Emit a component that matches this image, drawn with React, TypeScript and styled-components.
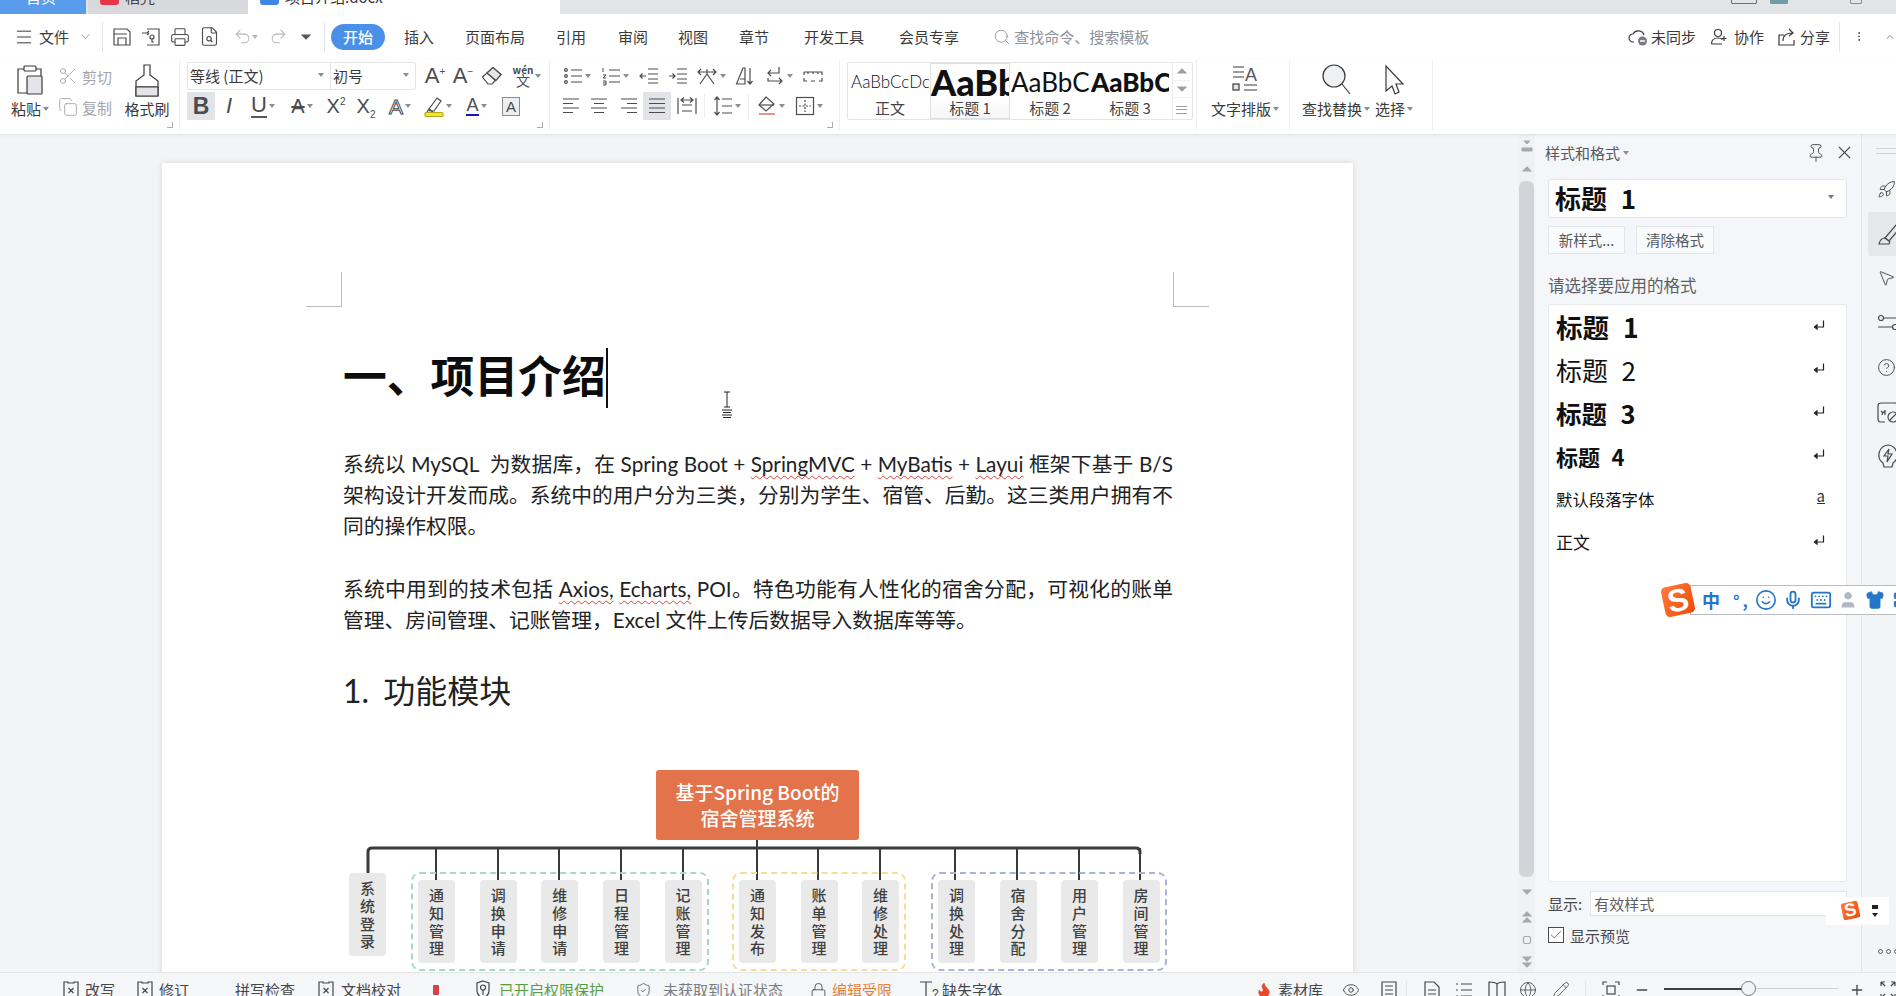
import React from "react";
import styled, { createGlobalStyle } from "styled-components";
import {
	CircleHelp,
	Copy,
	EllipsisVertical,
	Eye,
	Globe,
	Keyboard,
	LayoutGrid,
	Lock,
	Menu,
	Mic,
	Minus,
	MousePointer2,
	Pin,
	Plus,
	Printer,
	Redo2,
	Rocket,
	Scissors,
	Search,
	Shirt,
	ShieldCheck,
	Smile,
	Undo2,
	User,
	X,
	ChevronDown,
	ChevronUp,
	Check,
	FileSearch,
	Pencil,
	Flame,
} from "lucide-react";

const CJK = `"Noto Sans CJK SC", "Noto Sans", sans-serif`;
const LATIN = `Lato, "Noto Sans CJK SC", sans-serif`;

const GlobalStyle = createGlobalStyle`
	html, body {
		margin: 0;
		padding: 0;
		height: 996px;
		overflow: hidden;
		background: #fff;
		font-family: ${CJK};
	}
	* { box-sizing: border-box; }
`;

const Shell = styled.div`
	width: 1896px;
	height: 996px;
	display: flex;
	flex-direction: column;
	overflow: hidden;
	color: #333;
	position: relative;
`;

/* ---- title bar, only its lower edge is on screen ---- */
const TitleBar = styled.div`
	height: 14px;
	flex: none;
	display: flex;
	background: #e2e4e7;
	overflow: hidden;
`;
const TitleTab = styled.div<{ $w: number; $bg: string; $fg: string; $ml?: number; $pl?: number }>`
	width: ${(p) => p.$w}px;
	margin-left: ${(p) => p.$ml || 0}px;
	height: 14px;
	background: ${(p) => p.$bg};
	color: ${(p) => p.$fg};
	display: flex;
	align-items: flex-end;
	gap: 6px;
	padding: 0 12px 10px ${(p) => p.$pl || 12}px;
	font-size: 15px;
	line-height: 15px;
	white-space: nowrap;
`;
const TabIcon = styled.span<{ $c: string }>`
	width: 19px;
	height: 19px;
	flex: none;
	border-radius: 3px;
	background: ${(p) => p.$c};
	margin-bottom: -1px;
`;
const TitleRight = styled.div`
	margin-left: auto;
	display: flex;
	align-items: flex-end;
	padding: 0 34px 10px 0;
	height: 14px;
`;
const TitleMark = styled.span<{ $w: number; $c: string; $ml?: number }>`
	width: ${(p) => p.$w}px;
	height: 12px;
	margin-left: ${(p) => p.$ml || 0}px;
	border: 1px solid ${(p) => p.$c};
	background: ${(p) => (p.$ml === 13 ? p.$c : "transparent")};
	border-radius: 1px;
`;

/* ---- menu row ---- */
const MenuRow = styled.div`
	height: 46px;
	flex: none;
	display: flex;
	align-items: center;
	padding-bottom: 1px;
	background: #fff;
	font-size: 15px;
	color: #3a3a3a;
	white-space: nowrap;
`;
const Slot = styled.span<{ $w: number; $ml?: number; $c?: string }>`
	display: inline-flex;
	align-items: center;
	justify-content: center;
	flex: none;
	width: ${(p) => p.$w}px;
	margin-left: ${(p) => p.$ml || 0}px;
	color: ${(p) => p.$c || "inherit"};
`;
const Rule = styled.span<{ $ml?: number; $h?: number }>`
	flex: none;
	width: 1px;
	height: ${(p) => p.$h || 30}px;
	margin-left: ${(p) => p.$ml || 0}px;
	background: #e4e5e8;
`;
const MenuTab = styled.span<{ $ml: number }>`
	margin-left: ${(p) => p.$ml}px;
	flex: none;
`;
const ActiveTab = styled.span`
	flex: none;
	margin-left: 6px;
	width: 54px;
	height: 26px;
	border-radius: 13px;
	background: #4a90e9;
	color: #fff;
	display: flex;
	align-items: center;
	justify-content: center;
	font-weight: 500;
`;
const SearchHint = styled.span`
	margin-left: 34px;
	display: flex;
	align-items: center;
	gap: 3px;
	color: #8d9199;
	flex: none;
	width: 160px;
`;
const MenuRight = styled.div`
	margin-left: auto;
	display: flex;
	align-items: center;
`;

/* ---- ribbon ---- */
const Ribbon = styled.div`
	height: 74px;
	flex: none;
	display: flex;
	background: #fff;
	box-shadow: 0 1px 3px rgba(0, 0, 0, 0.08);
	position: relative;
	z-index: 2;
	font-size: 15px;
	color: #3a3a3a;
`;
const Group = styled.div<{ $w: number; $pl?: number; $ml?: number; $line?: boolean }>`
	flex: none;
	position: relative;
	width: ${(p) => p.$w}px;
	height: 70px;
	margin-left: ${(p) => p.$ml || 0}px;
	padding-left: ${(p) => p.$pl || 0}px;
	display: flex;
	border-right: ${(p) => (p.$line ? "1px solid #eeeff1" : "none")};
`;
const Launcher = styled.span`
	position: absolute;
	right: 6px;
	bottom: 2px;
	width: 6px;
	height: 6px;
	border-right: 1.5px solid #a9abb0;
	border-bottom: 1.5px solid #a9abb0;
`;
const BigButton = styled.div<{ $w: number; $ml?: number }>`
	flex: none;
	width: ${(p) => p.$w}px;
	margin-left: ${(p) => p.$ml || 0}px;
	padding-top: 4px;
	height: 60px;
	display: flex;
	flex-direction: column;
	align-items: center;
	justify-content: space-between;
	white-space: nowrap;
`;
const BigLabel = styled.span`
	display: flex;
	align-items: center;
	gap: 2px;
	height: 22px;
	line-height: 22px;
`;
const Caret = styled.i<{ $c?: string }>`
	flex: none;
	display: inline-block;
	width: 0;
	height: 0;
	border-left: 3.5px solid transparent;
	border-right: 3.5px solid transparent;
	border-top: 4px solid ${(p) => p.$c || "#8a8d92"};
`;
const SmallPair = styled.div`
	flex: none;
	width: 62px;
	margin-left: 6px;
	display: flex;
	flex-direction: column;
	gap: 3px;
	padding-top: 2px;
	color: #a4a6ab;
`;
const SmallAction = styled.span`
	height: 28px;
	display: flex;
	align-items: center;
	gap: 4px;
`;
const Rows = styled.div`
	display: flex;
	flex-direction: column;
	gap: 2px;
	padding-top: 2px;
`;
const ToolRow = styled.div`
	height: 28px;
	display: flex;
	align-items: center;
`;
const Tool = styled.span<{ $w: number; $on?: boolean; $ml?: number }>`
	flex: none;
	height: 28px;
	width: ${(p) => p.$w}px;
	margin-left: ${(p) => p.$ml || 0}px;
	display: inline-flex;
	align-items: center;
	justify-content: center;
	gap: 2px;
	color: #4a4c50;
	background: ${(p) => (p.$on ? "#e1e3e7" : "transparent")};
`;
const Glyph = styled.span<{ $s: number; $b?: boolean; $i?: boolean; $u?: string; $strike?: boolean; $hollow?: boolean }>`
	font-family: "Liberation Sans", sans-serif;
	font-size: ${(p) => p.$s}px;
	line-height: 1;
	font-weight: ${(p) => (p.$b ? 700 : 400)};
	font-style: ${(p) => (p.$i ? "italic" : "normal")};
	border-bottom: ${(p) => (p.$u ? `2px solid ${p.$u}` : "none")};
	text-decoration: ${(p) => (p.$strike ? "line-through" : "none")};
	${(p) => (p.$hollow ? "color: #fff; -webkit-text-stroke: 1px #4a4c50;" : "")}
	sup, sub {
		font-size: 10px;
		line-height: 0;
	}
`;
const BoxGlyph = styled(Glyph)`
	border: 1px solid #8a8c91;
	background: #eceef0;
	padding: 1px 3px;
`;
const FontCombo = styled.div`
	width: 229px;
	height: 28px;
	flex: none;
	display: flex;
	background: #fff;
	border: 1px solid #e4e5e8;
	border-radius: 2px;
`;
const ComboPart = styled.span<{ $w: number; $line?: boolean }>`
	width: ${(p) => p.$w}px;
	display: flex;
	align-items: center;
	justify-content: space-between;
	padding: 0 6px 2px 2px;
	border-right: ${(p) => (p.$line ? "1px solid #e4e5e8" : "none")};
	white-space: nowrap;
`;
const Wen = styled.span`
	display: flex;
	flex-direction: column;
	align-items: center;
	font-size: 14px;
	line-height: 13px;
	small {
		font-size: 10px;
		line-height: 9px;
		font-weight: 700;
	}
`;
const ToolRule = styled.span`
	width: 1px;
	height: 24px;
	margin: 0 2px;
	background: #eceef0;
	flex: none;
`;
const Gallery = styled.div`
	flex: none;
	width: 346px;
	height: 58px;
	margin: 2px 0 0 0;
	background: #fff;
	border: 1px solid #e4e5e8;
	border-radius: 2px;
	display: flex;
	padding-left: 2px;
`;
const StyleCard = styled.div<{ $on?: boolean }>`
	flex: none;
	width: 80px;
	height: 56px;
	overflow: hidden;
	display: flex;
	flex-direction: column;
	align-items: center;
	border: 1px solid ${(p) => (p.$on ? "#dfe0e3" : "transparent")};
	background: ${(p) => (p.$on ? "linear-gradient(#fff 60%, #f6f6f7)" : "transparent")};
	white-space: nowrap;
`;
const StylePreview = styled.div<{ $s: number; $b?: boolean; $light?: boolean }>`
	height: 35px;
	width: 100%;
	flex: none;
	display: flex;
	align-items: center;
	overflow: hidden;
	font-family: ${LATIN};
	font-size: ${(p) => p.$s}px;
	font-weight: ${(p) => (p.$b ? 900 : p.$light ? 300 : 400)};
	color: #111;
`;
const StyleName = styled.div`
	font-size: 15px;
	line-height: 17px;
	color: #444;
`;
const GalleryScroll = styled.div`
	flex: none;
	margin-left: 2px;
	width: 18px;
	border-left: 1px solid #eceef0;
	display: flex;
	flex-direction: column;
	color: #9b9da2;
`;
const ScrollCell = styled.span`
	flex: 1;
	display: flex;
	align-items: center;
	justify-content: center;
	border-bottom: 1px solid #f0f1f3;
	&:last-child {
		border-bottom: 0;
	}
`;

/* ---- body ---- */
const Body = styled.div`
	flex: 1;
	min-height: 0;
	display: flex;
	background: #f3f4f6;
`;
const Canvas = styled.div`
	width: 1518px;
	flex: none;
	padding: 29px 0 0 162px;
	overflow: hidden;
`;
const Page = styled.div`
	position: relative;
	width: 1191px;
	height: 900px;
	padding: 185px 180px 0 181px;
	background: #fff;
	box-shadow: 0 0 6px rgba(0, 0, 0, 0.12);
	color: #222;
`;
const CropMark = styled.span<{ $right?: boolean }>`
	position: absolute;
	top: 109px;
	left: ${(p) => (p.$right ? 1011 : 144)}px;
	width: 36px;
	height: 35px;
	border-bottom: 1px solid #bdbdbd;
	${(p) => (p.$right ? "border-left" : "border-right")}: 1px solid #bdbdbd;
`;
const Heading = styled.h1`
	margin: 0;
	height: 60px;
	display: flex;
	align-items: center;
	font-size: 43.8px;
	font-weight: 700;
	line-height: 60px;
	color: #0c0c0c;
`;
const HeadingText = styled.span`
	padding-bottom: 8px;
`;
const TextCaret = styled.span`
	width: 2px;
	height: 60px;
	margin-left: 0;
	background: #111;
	flex: none;
`;
const MouseCursor = styled.svg`
	position: absolute;
	left: 559px;
	top: 228px;
`;
const Paragraph = styled.div<{ $mt: number }>`
	margin-top: ${(p) => p.$mt}px;
`;
const TextLine = styled.div<{ $fit?: boolean }>`
	height: 31px;
	line-height: 31px;
	font-family: ${LATIN};
	font-size: 20.75px;
	font-weight: 400;
	white-space: normal;
	text-align: justify;
	text-align-last: ${(p) => (p.$fit ? "justify" : "left")};
	overflow: hidden;
`;
const Typo = styled.span`
	text-decoration: underline wavy #d8453e 1px;
	text-underline-offset: 3px;
	text-decoration-skip-ink: none;
`;
const SectionTitle = styled.h2`
	margin: 30px 0 0;
	height: 50px;
	line-height: 50px;
	font-size: 32px;
	font-weight: 400;
	font-family: ${LATIN};
	word-spacing: 6px;
`;

/* ---- the module diagram ---- */
const Diagram = styled.div`
	position: relative;
	margin-top: 54px;
	width: 830px;
`;
const DiagramLines = styled.svg`
	position: absolute;
	left: 0;
	top: 0;
`;
const RootNode = styled.div`
	position: relative;
	margin-left: 313px;
	width: 203px;
	height: 70px;
	border-radius: 3px;
	background: #e2734a;
	color: #fff;
	font-size: 19px;
	line-height: 26px;
	font-weight: 500;
	display: flex;
	flex-direction: column;
	align-items: center;
	justify-content: center;
`;
const NodeRow = styled.div`
	position: relative;
	margin: 32px 0 0 6px;
	display: flex;
	align-items: flex-start;
`;
const ModuleNode = styled.div<{ $top?: number }>`
	flex: none;
	width: 37px;
	height: 83px;
	margin-top: ${(p) => p.$top || 0}px;
	padding: 0 11px;
	border-radius: 4px;
	background: #e9e9e9;
	color: #3f3f3f;
	font-size: 15px;
	line-height: 17.6px;
	font-weight: 500;
	display: flex;
	align-items: center;
	justify-content: center;
	word-break: break-all;
	text-align: center;
`;
const ModuleGroup = styled.div<{ $w: number; $ml: number; $c: string }>`
	flex: none;
	width: ${(p) => p.$w}px;
	height: 99px;
	margin-left: ${(p) => p.$ml}px;
	padding: 6px 5px 0;
	border: 2px dashed ${(p) => p.$c};
	border-radius: 9px;
	display: flex;
	justify-content: space-between;
`;

/* ---- vertical scroll bar ---- */
const ScrollBar = styled.div`
	width: 17px;
	flex: none;
	background: #f0f1f4;
	display: flex;
	flex-direction: column;
	align-items: center;
	color: #a5a8ae;
`;
const ScrollButton = styled.span<{ $h: number }>`
	height: ${(p) => p.$h}px;
	display: flex;
	align-items: center;
	justify-content: center;
	flex: none;
`;
const ScrollThumb = styled.span`
	width: 15px;
	height: 696px;
	flex: none;
	border-radius: 6px;
	background: #d1d4d9;
`;

/* ---- styles panel ---- */
const Panel = styled.div`
	width: 327px;
	flex: none;
	padding: 0 14px 0 13px;
	background: #f5f6f9;
	border-right: 1px solid #e5e6e9;
`;
const PanelHead = styled.div`
	height: 37px;
	display: flex;
	align-items: center;
	margin-left: -3px;
	font-size: 15px;
	color: #55585e;
	gap: 3px;
`;
const PanelTools = styled.div`
	margin-left: auto;
	display: flex;
	align-items: center;
	gap: 8px;
	margin-right: -8px;
	color: #4d4f54;
`;
const StyleSelect = styled.div`
	margin-top: 8px;
	height: 39px;
	background: #fff;
	border: 1px solid #e3e5e8;
	border-radius: 3px;
	display: flex;
	align-items: center;
	justify-content: space-between;
	padding: 0 12px 3px 6px;
`;
const StyleText = styled.span<{ $s: number; $b?: boolean }>`
	font-size: ${(p) => p.$s}px;
	font-weight: ${(p) => (p.$b ? 700 : 400)};
	color: #111;
	word-spacing: 0.3em;
	white-space: nowrap;
`;
const PanelButtons = styled.div`
	margin-top: 8px;
	display: flex;
	gap: 11px;
`;
const PanelButton = styled.span<{ $w: number }>`
	width: ${(p) => p.$w}px;
	height: 28px;
	border: 1px solid #e3e5e8;
	background: #f9fafb;
	display: flex;
	align-items: center;
	justify-content: center;
	padding-bottom: 1px;
	font-size: 14.5px;
	color: #55585e;
`;
const PanelLabel = styled.div`
	margin-top: 19px;
	height: 24px;
	line-height: 24px;
	font-size: 16.5px;
	color: #5c5f65;
`;
const StyleList = styled.div`
	margin-top: 7px;
	height: 578px;
	background: #fff;
	border: 1px solid #e8e9ec;
	border-radius: 3px;
`;
const StyleItem = styled.div`
	height: 43px;
	display: flex;
	align-items: center;
	justify-content: space-between;
	padding: 0 21px 0 7px;
`;
const ReturnSlot = styled.span`
	margin-bottom: 4px;
	color: #222;
`;
const UnderA = styled.span`
	font-size: 15px;
	line-height: 14px;
	border-bottom: 1.5px solid #333;
	color: #333;
	margin-bottom: 4px;
`;
const ShowRow = styled.div`
	margin-top: 9px;
	display: flex;
	align-items: center;
	font-size: 15px;
	height: 25px;
	color: #44474c;
`;
const ShowField = styled.span`
	margin-left: 8px;
	flex: 1;
	height: 25px;
	background: #fff;
	border: 1px solid #e3e5e8;
	padding-left: 3px;
	line-height: 23px;
	color: #5c5f65;
`;
const PreviewRow = styled.div`
	margin-top: 10px;
	height: 18px;
	display: flex;
	align-items: center;
	gap: 6px;
	font-size: 15px;
	color: #44474c;
`;
const CheckBox = styled.span`
	width: 16px;
	height: 16px;
	border: 1px solid #46494e;
	background: #fff;
	display: flex;
	align-items: center;
	justify-content: center;
`;

/* ---- right rail ---- */
const Rail = styled.div`
	flex: 1;
	min-width: 0;
	overflow: hidden;
	display: flex;
	flex-direction: column;
	color: #46494e;
`;
const RailHandle = styled.div`
	height: 33px;
	flex: none;
	margin-left: 14px;
	padding-top: 14px;
	&::before {
		content: "";
		display: block;
		height: 4px;
		border-top: 1px solid #d0d2d6;
		border-bottom: 1px solid #d0d2d6;
	}
`;
const RailItem = styled.div<{ $on?: boolean }>`
	flex: none;
	height: 44.5px;
	margin-left: 6px;
	padding-left: 9px;
	display: flex;
	align-items: center;
	background: ${(p) => (p.$on ? "#e5e7ea" : "transparent")};
	border-radius: 3px 0 0 3px;
`;
const RailDots = styled.div`
	margin-top: auto;
	padding: 0 0 18px 16px;
	display: flex;
	gap: 3px;
`;
const Dot = styled.i`
	flex: none;
	width: 5px;
	height: 5px;
	border-radius: 50%;
	border: 1px solid #5c5f65;
`;

/* ---- status bar ---- */
const StatusBar = styled.div`
	height: 24px;
	flex: none;
	position: relative;
	z-index: 2;
	display: flex;
	align-items: flex-start;
	padding-top: 8px;
	background: #f5f6f8;
	border-top: 1px solid #e3e4e6;
	font-size: 15px;
	line-height: 18px;
	color: #44474c;
	white-space: nowrap;
	overflow: hidden;
`;
const StatusItem = styled.span<{ $ml: number; $c?: string }>`
	flex: none;
	display: flex;
	align-items: center;
	height: 18px;
	margin-left: ${(p) => p.$ml}px;
	color: ${(p) => p.$c || "inherit"};
`;
const RecDot = styled.span`
	width: 6px;
	height: 10px;
	border-radius: 1px;
	background: #d5434a;
`;
const StatusRight = styled.div`
	margin-left: auto;
	display: flex;
	align-items: flex-start;
`;
const ZoomTrack = styled.div`
	position: relative;
	flex: none;
	margin-left: 14px;
	width: 174px;
	height: 18px;
	&::before {
		content: "";
		position: absolute;
		left: 0;
		top: 7px;
		width: 84px;
		height: 1.5px;
		background: #3d3f44;
	}
	&::after {
		content: "";
		position: absolute;
		left: 84px;
		top: 7px;
		width: 90px;
		height: 1px;
		background: #cfd1d5;
	}
`;
const ZoomThumb = styled.span`
	position: absolute;
	left: 77px;
	top: 0;
	z-index: 1;
	width: 15px;
	height: 15px;
	border-radius: 50%;
	border: 1px solid #777a80;
	background: #f3f4f6;
`;

/* ---- sogou input bar, floats over the panel ---- */
const ImeBar = styled.div`
	position: absolute;
	left: 1690px;
	top: 585px;
	width: 230px;
	height: 30px;
	background: #fff;
	border: 1px solid #b9bcc2;
	display: flex;
	align-items: center;
	color: #2376c8;
	z-index: 5;
`;
const ImeLogo = styled.span<{ $s: number; $x: number; $y: number }>`
	position: absolute;
	left: ${(p) => p.$x}px;
	top: ${(p) => p.$y}px;
	width: ${(p) => p.$s}px;
	height: ${(p) => p.$s}px;
	border-radius: ${(p) => p.$s / 7}px;
	background: linear-gradient(135deg, #ff7b35, #ef4a0e);
	transform: rotate(-12deg);
	color: #fff;
	font-family: "Liberation Sans", sans-serif;
	font-weight: 700;
	font-size: ${(p) => p.$s * 1.05}px;
	line-height: ${(p) => p.$s}px;
	text-align: center;
	z-index: 6;
`;
const ImeText = styled.span<{ $ml: number; $s: number }>`
	flex: none;
	margin-left: ${(p) => p.$ml}px;
	font-size: ${(p) => p.$s}px;
	font-weight: 700;
	line-height: 28px;
	letter-spacing: 3px;
`;
const ImeIcon = styled.span<{ $ml: number; $c?: string }>`
	flex: none;
	margin-left: ${(p) => p.$ml}px;
	display: flex;
	color: ${(p) => p.$c || "inherit"};
`;
const ImeMini = styled.div`
	position: absolute;
	left: 1826px;
	top: 897px;
	width: 63px;
	height: 28px;
	background: #fff;
	z-index: 5;
	display: flex;
	flex-direction: column;
	align-items: flex-end;
	justify-content: center;
	gap: 4px;
	padding-right: 11px;
`;
const MiniArrow = styled.i<{ $up?: boolean }>`
	width: 6px;
	height: 4px;
	background: #222;
	clip-path: ${(p) => (p.$up ? "none" : "polygon(0 0, 100% 0, 50% 100%)")};
`;

/* ---- icons ---- */
const Svg = styled.svg`
	fill: none;
	stroke: currentColor;
	stroke-width: 1.2;
	flex: none;
	display: block;
`;
const Ic: React.FC<{ w: number; h: number; children: React.ReactNode; sw?: number }> = ({ w, h, children, sw }) => (
	<Svg width={w} height={h} viewBox={`0 0 ${w} ${h}`} style={sw ? { strokeWidth: sw } : undefined}>
		{children}
	</Svg>
);
const GREY = "#e3e5e9";

const SaveIcon = () => (
	<Ic w={20} h={20}>
		<path d="M2 2h13l3 3v13H2z" />
		<path d="M2 7h13M6 18v-7h8v7" />
	</Ic>
);
const SaveAsIcon = () => (
	<Ic w={20} h={20}>
		<path d="M6 2h12v16H6" />
		<path d="M1 6h5l2-2M6 8 8 6" />
		<circle cx="11" cy="10" r="2" />
		<path d="M11 12v3h2" />
	</Ic>
);
const ReturnMark = () => (
	<ReturnSlot>
		<Ic w={12} h={12}>
			<path d="M10.5 1.5v6.5H1.5" />
			<path d="M4.5 5.5 1.5 8l3 2.5" fill="#222" />
		</Ic>
	</ReturnSlot>
);
const CloudIcon = () => (
	<Ic w={20} h={20}>
		<path d="M6 15H5a4 4 0 0 1 0-8 6 6 0 0 1 11 1" />
		<circle cx="14.5" cy="14" r="4.5" fill="#787b81" stroke="none" />
		<path d="M12 14h5" stroke="#fff" strokeWidth="1.5" />
	</Ic>
);
const CoopIcon = () => (
	<Ic w={18} h={18}>
		<circle cx="8" cy="5" r="3.5" />
		<path d="M1.5 16c0-5 3-6 6.5-6 2 0 3.5.5 4.5 1.5M1.5 16H12M14 8v5M11.5 10.5h5" />
	</Ic>
);
const ShareIcon = () => (
	<Ic w={20} h={20}>
		<path d="M7 8H2v10h15v-5" />
		<path d="M6 14c0-6 4-8 9-8M12 2l4 4-4 3" />
	</Ic>
);
const PasteIcon = () => (
	<Ic w={28} h={32}>
		<path d="M8 5H2v24h9M20 5h5v7" />
		<rect x="8" y="2" width="12" height="5" rx="1" />
		<rect x="11" y="12" width="15" height="18" rx="1" fill={GREY} />
	</Ic>
);
const BrushIcon = () => (
	<Ic w={24} h={34}>
		<path d="M9 11V1h6v10l8 6v15H1V17z" />
		<path d="M1 23h22" />
		<path d="M1 23h22v9H1z" fill={GREY} />
	</Ic>
);
const EraserIcon = () => (
	<Ic w={22} h={20}>
		<path d="M1.5 11 12 1.5l8 7L11 18H7z" />
		<path d="M6 7l9 8" />
		<path d="M12 1.5l8 7-5 6-9-7.5z" fill={GREY} />
	</Ic>
);
const HighlightIcon = () => (
	<Ic w={20} h={22}>
		<path d="M5 14 13 3l4 3-7 10H6z" fill="#fff" />
		<path d="M2 19 5 14l4 3" />
		<rect x="1" y="17.5" width="18" height="4" rx="1" fill="#f2e52e" stroke="#b4a81a" />
	</Ic>
);
const BulletsIcon = () => (
	<Ic w={20} h={20}>
		<circle cx="3" cy="4" r="1.3" />
		<circle cx="3" cy="10" r="1.3" />
		<circle cx="3" cy="16" r="1.3" />
		<path d="M8 4h11M8 10h11M8 16h11" />
	</Ic>
);
const NumbersIcon = () => (
	<Ic w={20} h={20}>
		<path d="M2 2v4M2 9h3l-3 3h3M2 15h3v4H2M2 17h3" strokeWidth="1" />
		<path d="M8 4h11M8 10h11M8 16h11" />
	</Ic>
);
const IndentIcon: React.FC<{ more?: boolean }> = ({ more }) => (
	<Ic w={20} h={18}>
		<path d="M9 2h10M9 7h10M9 12h10M9 16h10" />
		<path d={more ? "M1 9h6M4.5 6.5 7 9l-2.5 2.5" : "M1 9h6M3.5 6.5 1 9l2.5 2.5"} />
	</Ic>
);
const AsianIcon = () => (
	<Ic w={22} h={20}>
		<path d="M2 6h18M5 3 2 6l3 3M17 3l3 3-3 3M11 3v5M4 18 11 8l7 10" />
	</Ic>
);
const SortIcon = () => (
	<Ic w={20} h={20}>
		<path d="M1.5 18 8 2h2v16H1.5zM5 13h5" />
		<path d="M15 2v16M12.5 15l2.5 3 2.5-3" />
	</Ic>
);
const EnterIcon = () => (
	<Ic w={20} h={20}>
		<path d="M14 1v6H3M6 4 3 7l3 3" />
		<path d="M3 12v3h14M14 12l3 3-3 3" />
	</Ic>
);
const RulerIcon = () => (
	<Ic w={20} h={12}>
		<path d="M1 2h18v3M1 2v3M5 2v2M10 2v2M15 2v2M1 8v3h3M19 8v3h-3M8 11h4" />
	</Ic>
);
const AlignIcon: React.FC<{ kind: "left" | "center" | "right" | "full" }> = ({ kind }) => {
	const d = {
		left: "M2 3h16M2 7.5h10M2 12h16M2 16.5h10",
		center: "M2 3h16M5 7.5h10M2 12h16M5 16.5h10",
		right: "M2 3h16M8 7.5h10M2 12h16M8 16.5h10",
		full: "M2 3h16M2 7.5h16M2 12h16M2 16.5h16",
	}[kind];
	return (
		<Ic w={20} h={20}>
			<path d={d} />
		</Ic>
	);
};
const DistributeIcon = () => (
	<Ic w={22} h={20}>
		<path d="M2 2v16M20 2v16M6 9h10M6 15h10M5 4h12M8 1.5 5 4l3 2.5M14 1.5 17 4l-3 2.5" />
	</Ic>
);
const SpacingIcon = () => (
	<Ic w={20} h={22}>
		<path d="M4 2v18M1.5 5 4 2l2.5 3M1.5 17 4 20l2.5-3M9 4h10M9 11h10M9 18h10" />
	</Ic>
);
const ShadeIcon = () => (
	<Ic w={20} h={22}>
		<path d="M9 2 2 10l7 6 8-7z" />
		<path d="M2 10h15" />
		<path d="M2 19h16" stroke="#d2504d" />
	</Ic>
);
const BorderIcon = () => (
	<Ic w={20} h={20}>
		<rect x="1.5" y="1.5" width="17" height="17" />
		<path d="M10 4v12M4 10h12" strokeDasharray="2 1.5" />
	</Ic>
);
const TextLayoutIcon = () => (
	<Ic w={28} h={30}>
		<path d="M2 3h11M2 8h11M2 13h11" />
		<text x="14" y="17" fontSize="18" fill="#55585e" stroke="none" fontFamily="Liberation Sans">
			A
		</text>
		<rect x="2" y="20" width="6" height="6" fill={GREY} />
		<path d="M13 21h13M13 26h13" />
	</Ic>
);
const FindIcon = () => (
	<Ic w={30} h={32}>
		<circle cx="13" cy="12" r="11" fill="#eef0f2" />
		<path d="M21 20l8 10" />
	</Ic>
);
const ArrowIcon = () => (
	<Ic w={22} h={32}>
		<path d="M3 2v25l6-5 3 8 4-2-3-8h7z" fill="#fafafa" />
	</Ic>
);
const IbeamIcon = () => (
	<MouseCursor width="12" height="28" viewBox="0 0 12 28" fill="none" stroke="#222">
		<path d="M3 1h6M6 1v15M3 16h6M1 19h10M2 21.5h8M1 24h10M2 26.5h8" />
	</MouseCursor>
);
const SplitIcon = () => (
	<Ic w={12} h={12} sw={1}>
		<path d="M3 1h6L6 4z" fill="currentColor" />
		<path d="M1 8h10v3H1z" fill="currentColor" />
	</Ic>
);
const TriUp = () => (
	<Ic w={10} h={6}>
		<path d="M1 5h8L5 1z" fill="currentColor" />
	</Ic>
);
const TriDown = () => (
	<Ic w={10} h={6}>
		<path d="M1 1h8L5 5z" fill="currentColor" />
	</Ic>
);
const DoubleTri: React.FC<{ down?: boolean }> = ({ down }) => (
	<Ic w={10} h={12}>
		<path d={down ? "M1 1h8L5 5zM1 7h8l-4 4z" : "M1 5h8L5 1zM1 11h8L5 7z"} fill="currentColor" />
	</Ic>
);
const SlidersIcon = () => (
	<Ic w={24} h={20}>
		<circle cx="4" cy="5" r="2.5" />
		<path d="M7 5h17M1 14h14" />
		<circle cx="18" cy="14" r="2.5" />
	</Ic>
);
const LeafIcon = () => (
	<Ic w={24} h={22}>
		<path d="M8 21H3c-1 0-2-1-2-3V5c0-2 1-3 3-3h14c2 0 3 1 3 3v4" />
		<path d="M5 14c0-3 3-3 3-5M8 14V9M4 10l2 2" />
		<circle cx="16" cy="16" r="5" />
		<path d="M13 19l6-6" />
	</Ic>
);
const BoltIcon = () => (
	<Ic w={22} h={24}>
		<path d="M11 1a10 10 0 0 1 5 18l-1 4H7l-1-4A10 10 0 0 1 11 1z" />
		<path d="M12 5 7 12h4l-1 6 5-8h-4z" />
	</Ic>
);
const BrushSideIcon = () => (
	<Ic w={24} h={24}>
		<path d="M8 16 19 3l4 3L12 19z" />
		<path d="M8 16c-3 0-5 2-6 6h10c1-2 1-3 0-3z" />
	</Ic>
);
const StatusBox = () => (
	<Ic w={16} h={20}>
		<path d="M1 2h4v1h6V2h4v17H1z" />
		<path d="M5.5 8l5 5M10.5 8l-5 5" />
	</Ic>
);
const KeyShield = () => (
	<Ic w={16} h={20}>
		<path d="M8 1l6 2v8c0 4-3 6-6 8-3-2-6-4-6-8V3z" />
		<circle cx="8" cy="7.5" r="2.5" />
		<path d="M8 10v5" />
	</Ic>
);
const MissingFont = () => (
	<Ic w={22} h={20}>
		<path d="M1 2h12M7 2v16M4 18h6" />
		<text x="13" y="18" fontSize="12" fill="#44474c" stroke="none" fontFamily="Liberation Sans">
			?
		</text>
	</Ic>
);
const DocIcon = () => (
	<Ic w={16} h={20}>
		<path d="M1 2h14v17H1zM4 6h8M4 10h8M4 14h8" />
	</Ic>
);
const PageIcon = () => (
	<Ic w={16} h={20}>
		<path d="M1 2h9l5 5v12H1zM4 10h8M4 14h8" />
	</Ic>
);
const ListIcon = () => (
	<Ic w={18} h={20}>
		<path d="M1 4h2M6 4h11M1 10h2M6 10h11M1 16h2M6 16h11" />
	</Ic>
);
const BookIcon = () => (
	<Ic w={18} h={20}>
		<path d="M9 4C7 2 4 2 1 2v16c3 0 6 0 8 2 2-2 5-2 8-2V2c-3 0-6 0-8 2zM9 4v16" />
	</Ic>
);
const FocusIcon = () => (
	<Ic w={18} h={20}>
		<path d="M1 5V2h4M13 2h4v3M1 15v3h4M13 18h4v-3" />
		<rect x="5" y="6" width="8" height="8" />
	</Ic>
);
const ExpandIcon = () => (
	<Ic w={16} h={20}>
		<path d="M1 2h4M1 2v4M1 2l4 4M15 2h-4M15 2v4M15 2l-4 4M1 18h4M1 18v-4M1 18l4-4M15 18h-4M15 18v-4M15 18l-4-4" />
	</Ic>
);

const groups = [
	{ w: 297.5, ml: 25, c: "#a8d8c6", items: ["通知管理", "调换申请", "维修申请", "日程管理", "记账管理"] },
	{ w: 174, ml: 23.5, c: "#f3dc9c", items: ["通知发布", "账单管理", "维修处理"] },
	{ w: 235.5, ml: 25, c: "#a9b3d9", items: ["调换处理", "宿舍分配", "用户管理", "房间管理"] },
];
const drops = [93, 155, 216, 278, 340, 414, 475, 537, 612, 674, 736, 797];

const styleRows = [
	{ name: "标题 1", s: 26.5, b: true },
	{ name: "标题 2", s: 26, b: false },
	{ name: "标题 3", s: 25.5, b: true },
	{ name: "标题 4", s: 22, b: true },
];

const App: React.FC = () => {
	return (
		<Shell>
			<GlobalStyle />
			<TitleBar>
				<TitleTab $w={86} $pl={26} $bg="#5a9cec" $fg="#fff">
					首页
				</TitleTab>
				<TitleTab $w={160} $ml={2} $bg="#d8d9dc" $fg="#444">
					<TabIcon $c="#e8364a" />
					稻壳
				</TitleTab>
				<TitleTab $w={312} $bg="#fff" $fg="#333">
					<TabIcon $c="#3f86e6" />
					项目介绍.docx
				</TitleTab>
				<TitleRight>
					<TitleMark $w={26} $c="#6b6e74" />
					<TitleMark $w={18} $ml={13} $c="#6f9aa6" />
					<TitleMark $w={12} $ml={62} $c="#8a8c91" />
				</TitleRight>
			</TitleBar>

			<MenuRow>
				<Slot $w={24} $ml={12}>
					<Menu size={20} strokeWidth={1.2} />
				</Slot>
				<Slot $w={36}>文件</Slot>
				<Slot $w={26} $c="#8a8d92">
					<ChevronDown size={15} strokeWidth={1.3} />
				</Slot>
				<Rule $ml={4} />
				<Slot $w={28} $ml={5} $c="#4a4c50">
					<SaveIcon />
				</Slot>
				<Slot $w={30} $c="#4a4c50">
					<SaveAsIcon />
				</Slot>
				<Slot $w={28} $c="#4a4c50">
					<Printer size={20} strokeWidth={1.3} />
				</Slot>
				<Slot $w={30} $c="#4a4c50">
					<FileSearch size={21} strokeWidth={1.3} />
				</Slot>
				<Slot $w={42} $c="#b5b7bb">
					<Undo2 size={19} strokeWidth={1.3} />
					<Caret $c="#b5b7bb" />
				</Slot>
				<Slot $w={24} $c="#b5b7bb">
					<Redo2 size={19} strokeWidth={1.3} />
				</Slot>
				<Slot $w={24} $ml={4} $c="#55585e">
					<TriDown />
				</Slot>
				<Rule $ml={6} />
				<ActiveTab>开始</ActiveTab>
				<MenuTab $ml={19}>插入</MenuTab>
				<MenuTab $ml={31}>页面布局</MenuTab>
				<MenuTab $ml={31}>引用</MenuTab>
				<MenuTab $ml={32}>审阅</MenuTab>
				<MenuTab $ml={30}>视图</MenuTab>
				<MenuTab $ml={31}>章节</MenuTab>
				<MenuTab $ml={35}>开发工具</MenuTab>
				<MenuTab $ml={35}>会员专享</MenuTab>
				<SearchHint>
					<Search size={18} strokeWidth={1.2} />
					查找命令、搜索模板
				</SearchHint>
				<MenuRight>
					<CloudIcon />
					<Slot $w={45} $ml={3}>
						未同步
					</Slot>
					<Slot $w={18} $ml={14}>
						<CoopIcon />
					</Slot>
					<Slot $w={30} $ml={6}>
						协作
					</Slot>
					<Slot $w={20} $ml={13}>
						<ShareIcon />
					</Slot>
					<Slot $w={30} $ml={3}>
						分享
					</Slot>
					<Rule $ml={9} />
					<Slot $w={12} $ml={13}>
						<EllipsisVertical size={17} strokeWidth={1.6} />
					</Slot>
					<Slot $w={12} $ml={19}>
						<ChevronUp size={18} strokeWidth={1.2} />
					</Slot>
				</MenuRight>
			</MenuRow>

			<Ribbon>
				<Group $w={180} $pl={8} $line>
					<BigButton $w={44}>
						<PasteIcon />
						<BigLabel>
							粘贴
							<Caret />
						</BigLabel>
					</BigButton>
					<SmallPair>
						<SmallAction>
							<Scissors size={20} strokeWidth={1.1} />
							剪切
						</SmallAction>
						<SmallAction>
							<Copy size={20} strokeWidth={1.1} />
							复制
						</SmallAction>
					</SmallPair>
					<BigButton $w={46} $ml={4}>
						<BrushIcon />
						<BigLabel>格式刷</BigLabel>
					</BigButton>
					<Launcher />
				</Group>

				<Group $w={370} $pl={7} $line>
					<Rows>
						<ToolRow>
							<FontCombo>
								<ComboPart $w={143} $line>
									等线 (正文)
									<Caret />
								</ComboPart>
								<ComboPart $w={84}>
									初号
									<Caret />
								</ComboPart>
							</FontCombo>
							<Tool $w={30} $ml={4}>
								<Glyph $s={22}>
									A<sup>+</sup>
								</Glyph>
							</Tool>
							<Tool $w={26}>
								<Glyph $s={22}>
									A<sup>−</sup>
								</Glyph>
							</Tool>
							<Tool $w={32}>
								<EraserIcon />
							</Tool>
							<Tool $w={38}>
								<Wen>
									<small>wén</small>文
								</Wen>
								<Caret />
							</Tool>
						</ToolRow>
						<ToolRow>
							<Tool $w={28} $on>
								<Glyph $s={23} $b>
									B
								</Glyph>
							</Tool>
							<Tool $w={28}>
								<Glyph $s={22} $i>
									I
								</Glyph>
							</Tool>
							<Tool $w={40}>
								<Glyph $s={22} $u="#55585e">
									U
								</Glyph>
								<Caret />
							</Tool>
							<Tool $w={38}>
								<Glyph $s={20} $strike>
									A
								</Glyph>
								<Caret />
							</Tool>
							<Tool $w={30}>
								<Glyph $s={20}>
									X<sup>2</sup>
								</Glyph>
							</Tool>
							<Tool $w={30}>
								<Glyph $s={20}>
									X<sub>2</sub>
								</Glyph>
							</Tool>
							<Tool $w={38}>
								<Glyph $s={21} $hollow>
									A
								</Glyph>
								<Caret />
							</Tool>
							<Tool $w={38}>
								<HighlightIcon />
								<Caret />
							</Tool>
							<Tool $w={39}>
								<Glyph $s={18} $u="#1414c8">
									A
								</Glyph>
								<Caret />
							</Tool>
							<Tool $w={30}>
								<BoxGlyph $s={15}>A</BoxGlyph>
							</Tool>
						</ToolRow>
					</Rows>
					<Launcher />
				</Group>

				<Group $w={290} $pl={8} $line>
					<Rows>
						<ToolRow>
							<Tool $w={38}>
								<BulletsIcon />
								<Caret />
							</Tool>
							<Tool $w={38}>
								<NumbersIcon />
								<Caret />
							</Tool>
							<Tool $w={30}>
								<IndentIcon />
							</Tool>
							<Tool $w={28}>
								<IndentIcon more />
							</Tool>
							<Tool $w={38}>
								<AsianIcon />
								<Caret />
							</Tool>
							<Tool $w={30}>
								<SortIcon />
							</Tool>
							<Tool $w={38}>
								<EnterIcon />
								<Caret />
							</Tool>
							<Tool $w={30}>
								<RulerIcon />
							</Tool>
						</ToolRow>
						<ToolRow>
							<Tool $w={26}>
								<AlignIcon kind="left" />
							</Tool>
							<Tool $w={30}>
								<AlignIcon kind="center" />
							</Tool>
							<Tool $w={29}>
								<AlignIcon kind="right" />
							</Tool>
							<Tool $w={28} $on>
								<AlignIcon kind="full" />
							</Tool>
							<Tool $w={31}>
								<DistributeIcon />
							</Tool>
							<ToolRule />
							<Tool $w={39}>
								<SpacingIcon />
								<Caret />
							</Tool>
							<ToolRule />
							<Tool $w={39}>
								<ShadeIcon />
								<Caret />
							</Tool>
							<Tool $w={38}>
								<BorderIcon />
								<Caret />
							</Tool>
						</ToolRow>
					</Rows>
					<Launcher />
				</Group>

				<Group $w={350} $ml={7} $line>
					<Gallery>
						<StyleCard>
							<StylePreview $s={17} $light>
								AaBbCcDc
							</StylePreview>
							<StyleName>正文</StyleName>
						</StyleCard>
						<StyleCard $on>
							<StylePreview $s={36} $b>
								AaBbCc
							</StylePreview>
							<StyleName>标题 1</StyleName>
						</StyleCard>
						<StyleCard>
							<StylePreview $s={26}>AaBbC</StylePreview>
							<StyleName>标题 2</StyleName>
						</StyleCard>
						<StyleCard>
							<StylePreview $s={26} $b>
								AaBbC
							</StylePreview>
							<StyleName>标题 3</StyleName>
						</StyleCard>
						<GalleryScroll>
							<ScrollCell>
								<TriUp />
							</ScrollCell>
							<ScrollCell>
								<TriDown />
							</ScrollCell>
							<ScrollCell>≡</ScrollCell>
						</GalleryScroll>
					</Gallery>
				</Group>

				<Group $w={93} $line>
					<BigButton $w={84} $ml={6}>
						<TextLayoutIcon />
						<BigLabel>
							文字排版
							<Caret />
						</BigLabel>
					</BigButton>
				</Group>

				<Group $w={143} $pl={12} $line>
					<BigButton $w={68}>
						<FindIcon />
						<BigLabel>
							查找替换
							<Caret />
						</BigLabel>
					</BigButton>
					<BigButton $w={40} $ml={4}>
						<ArrowIcon />
						<BigLabel>
							选择
							<Caret />
						</BigLabel>
					</BigButton>
				</Group>
			</Ribbon>

			<Body>
				<Canvas>
					<Page>
						<CropMark />
						<CropMark $right />
						<IbeamIcon />
						<Heading>
							<HeadingText>一、项目介绍</HeadingText>
							<TextCaret />
						</Heading>
						<Paragraph $mt={41}>
							<TextLine $fit>
								系统以 MySQL&nbsp; 为数据库，在 Spring Boot + <Typo>SpringMVC</Typo> + <Typo>MyBatis</Typo> + <Typo>Layui</Typo> 框架下基于 B/S
							</TextLine>
							<TextLine $fit>架构设计开发而成。系统中的用户分为三类，分别为学生、宿管、后勤。这三类用户拥有不</TextLine>
							<TextLine>同的操作权限。</TextLine>
						</Paragraph>
						<Paragraph $mt={32}>
							<TextLine $fit>
								系统中用到的技术包括 <Typo>Axios,</Typo> <Typo>Echarts,</Typo> POI。特色功能有人性化的宿舍分配，可视化的账单
							</TextLine>
							<TextLine>管理、房间管理、记账管理，Excel 文件上传后数据导入数据库等等。</TextLine>
						</Paragraph>
						<SectionTitle>1. 功能模块</SectionTitle>
						<Diagram>
							<DiagramLines width="830" height="112" viewBox="0 0 830 112" fill="none" stroke="#3a3a3a">
								<path d="M414 70v8" strokeWidth="2" />
								<path d="M25 103V82q0-4 4-4h764q4 0 4 4v2" strokeWidth="3" />
								{drops.map((x) => (
									<path key={x} d={`M${x} 78v32`} strokeWidth="2" />
								))}
							</DiagramLines>
							<RootNode>
								<span>基于Spring Boot的</span>
								<span>宿舍管理系统</span>
							</RootNode>
							<NodeRow>
								<ModuleNode $top={1}>系统登录</ModuleNode>
								{groups.map((g) => (
									<ModuleGroup key={g.c} $w={g.w} $ml={g.ml} $c={g.c}>
										{g.items.map((t) => (
											<ModuleNode key={t}>{t}</ModuleNode>
										))}
									</ModuleGroup>
								))}
							</NodeRow>
						</Diagram>
					</Page>
				</Canvas>

				<ScrollBar>
					<ScrollButton $h={23}>
						<SplitIcon />
					</ScrollButton>
					<ScrollButton $h={24}>
						<TriUp />
					</ScrollButton>
					<ScrollThumb />
					<ScrollButton $h={30}>
						<TriDown />
					</ScrollButton>
					<ScrollButton $h={20}>
						<DoubleTri />
					</ScrollButton>
					<ScrollButton $h={26}>
						<Ic w={10} h={10}>
							<rect x="1.5" y="1.5" width="7" height="7" rx="1.5" />
						</Ic>
					</ScrollButton>
					<ScrollButton $h={18}>
						<DoubleTri down />
					</ScrollButton>
				</ScrollBar>

				<Panel>
					<PanelHead>
						样式和格式
						<Caret />
						<PanelTools>
							<Pin size={20} strokeWidth={1.2} />
							<X size={21} strokeWidth={1.3} />
						</PanelTools>
					</PanelHead>
					<StyleSelect>
						<StyleText $s={26} $b>
							标题 1
						</StyleText>
						<Caret $c="#77797e" />
					</StyleSelect>
					<PanelButtons>
						<PanelButton $w={77}>新样式...</PanelButton>
						<PanelButton $w={78}>清除格式</PanelButton>
					</PanelButtons>
					<PanelLabel>请选择要应用的格式</PanelLabel>
					<StyleList>
						{styleRows.map((r) => (
							<StyleItem key={r.name}>
								<StyleText $s={r.s} $b={r.b}>
									{r.name}
								</StyleText>
								<ReturnMark />
							</StyleItem>
						))}
						<StyleItem>
							<StyleText $s={16.4}>默认段落字体</StyleText>
							<UnderA>a</UnderA>
						</StyleItem>
						<StyleItem>
							<StyleText $s={17}>正文</StyleText>
							<ReturnMark />
						</StyleItem>
					</StyleList>
					<ShowRow>
						显示:
						<ShowField>有效样式</ShowField>
					</ShowRow>
					<PreviewRow>
						<CheckBox>
							<Check size={14} strokeWidth={1.3} />
						</CheckBox>
						显示预览
					</PreviewRow>
				</Panel>

				<Rail>
					<RailHandle />
					<RailItem>
						<Rocket size={23} strokeWidth={1.2} />
					</RailItem>
					<RailItem $on>
						<BrushSideIcon />
					</RailItem>
					<RailItem>
						<MousePointer2 size={22} strokeWidth={1.2} />
					</RailItem>
					<RailItem>
						<SlidersIcon />
					</RailItem>
					<RailItem>
						<CircleHelp size={23} strokeWidth={1.2} />
					</RailItem>
					<RailItem>
						<LeafIcon />
					</RailItem>
					<RailItem>
						<BoltIcon />
					</RailItem>
					<RailDots>
						<Dot />
						<Dot />
						<Dot />
						<Dot />
					</RailDots>
				</Rail>
			</Body>

			<StatusBar>
				<StatusItem $ml={63}>
					<StatusBox />
				</StatusItem>
				<StatusItem $ml={6}>改写</StatusItem>
				<StatusItem $ml={22}>
					<StatusBox />
				</StatusItem>
				<StatusItem $ml={6}>修订</StatusItem>
				<StatusItem $ml={46}>拼写检查</StatusItem>
				<StatusItem $ml={23}>
					<StatusBox />
				</StatusItem>
				<StatusItem $ml={7}>文档校对</StatusItem>
				<StatusItem $ml={32}>
					<RecDot />
				</StatusItem>
				<StatusItem $ml={36}>
					<KeyShield />
				</StatusItem>
				<StatusItem $ml={8} $c="#5b9c3f">
					已开启权限保护
				</StatusItem>
				<StatusItem $ml={31}>
					<ShieldCheck size={17} strokeWidth={1.1} />
				</StatusItem>
				<StatusItem $ml={11} $c="#7a7d82">
					未获取到认证状态
				</StatusItem>
				<StatusItem $ml={27}>
					<Lock size={17} strokeWidth={1.2} />
				</StatusItem>
				<StatusItem $ml={5} $c="#e5813f">
					编辑受限
				</StatusItem>
				<StatusItem $ml={27}>
					<MissingFont />
				</StatusItem>
				<StatusItem $ml={1}>缺失字体</StatusItem>
				<StatusRight>
					<StatusItem $ml={0} $c="#e64a2e">
						<Flame size={18} fill="#e64a2e" strokeWidth={1} />
					</StatusItem>
					<StatusItem $ml={5}>素材库</StatusItem>
					<StatusItem $ml={19}>
						<Eye size={18} strokeWidth={1.2} />
					</StatusItem>
					<StatusItem $ml={21}>
						<DocIcon />
					</StatusItem>
					<Rule $ml={9} $h={18} />
					<StatusItem $ml={17}>
						<PageIcon />
					</StatusItem>
					<StatusItem $ml={15}>
						<ListIcon />
					</StatusItem>
					<StatusItem $ml={15}>
						<BookIcon />
					</StatusItem>
					<StatusItem $ml={13}>
						<Globe size={18} strokeWidth={1.1} />
					</StatusItem>
					<StatusItem $ml={15}>
						<Pencil size={18} strokeWidth={1.1} />
					</StatusItem>
					<Rule $ml={15} $h={18} />
					<StatusItem $ml={16}>
						<FocusIcon />
					</StatusItem>
					<StatusItem $ml={14}>
						<Minus size={16} strokeWidth={2.2} />
					</StatusItem>
					<ZoomTrack>
						<ZoomThumb />
					</ZoomTrack>
					<StatusItem $ml={11}>
						<Plus size={16} strokeWidth={2} />
					</StatusItem>
					<StatusItem $ml={15}>
						<ExpandIcon />
					</StatusItem>
				</StatusRight>
			</StatusBar>

			<ImeLogo $s={30} $x={1663} $y={585}>
				S
			</ImeLogo>
			<ImeBar>
				<ImeText $ml={11} $s={18}>
					中
				</ImeText>
				<ImeText $ml={10} $s={16}>
					°,
				</ImeText>
				<ImeIcon $ml={4}>
					<Smile size={22} strokeWidth={1.8} />
				</ImeIcon>
				<ImeIcon $ml={6}>
					<Mic size={20} strokeWidth={2.2} />
				</ImeIcon>
				<ImeIcon $ml={7}>
					<Keyboard size={22} strokeWidth={2} />
				</ImeIcon>
				<ImeIcon $ml={6} $c="#b3b8c0">
					<User size={20} fill="#b3b8c0" strokeWidth={1} />
				</ImeIcon>
				<ImeIcon $ml={7}>
					<Shirt size={20} fill="#2376c8" strokeWidth={1} />
				</ImeIcon>
				<ImeIcon $ml={7}>
					<LayoutGrid size={18} fill="#2376c8" strokeWidth={1} />
				</ImeIcon>
			</ImeBar>
			<ImeMini>
				<MiniArrow $up />
				<MiniArrow />
			</ImeMini>
			<ImeLogo $s={17} $x={1842} $y={902}>
				S
			</ImeLogo>
		</Shell>
	);
};

export default App;
